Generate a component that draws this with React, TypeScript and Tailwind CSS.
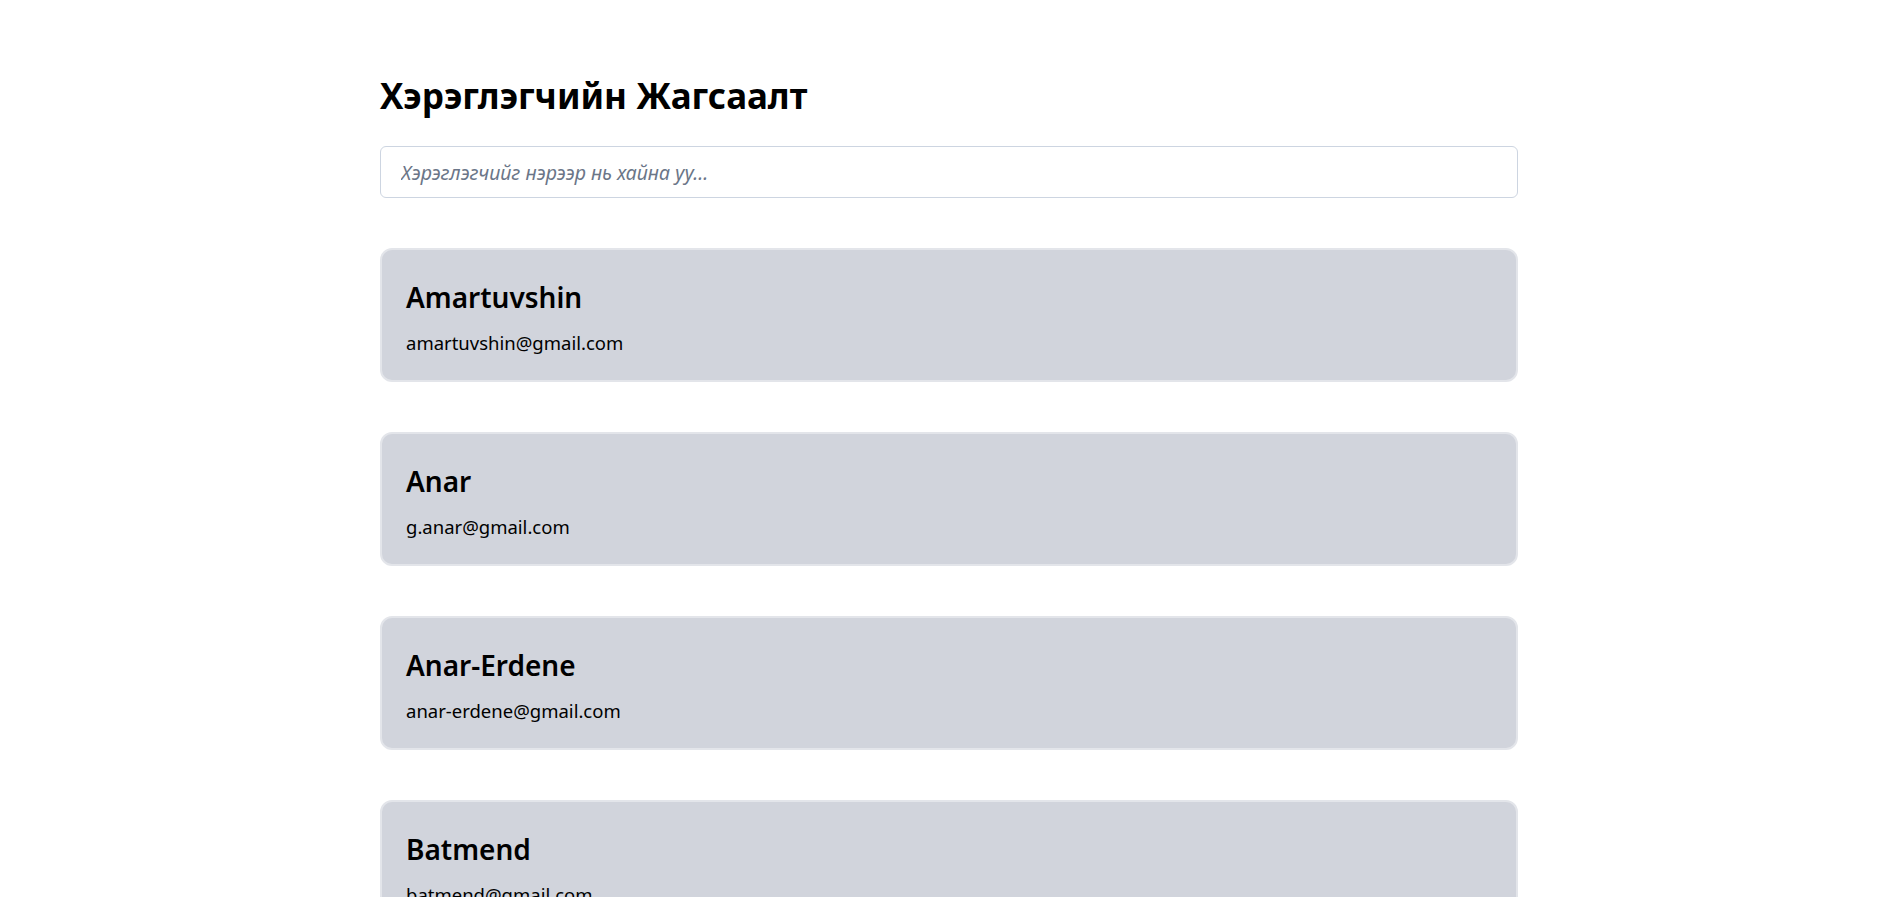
const users = [
  { name: "Amartuvshin", email: "amartuvshin@gmail.com" },
  { name: "Anar", email: "g.anar@gmail.com" },
  { name: "Anar-Erdene", email: "anar-erdene@gmail.com" },
  { name: "Batmend", email: "batmend@gmail.com" },
  { name: "Bilguun", email: "bilguun@gmail.com" },
]

function UserCard({ name, email }: { name: string; email: string }) {
  return (
    <div className="h-[134px] rounded-xl border-2 border-[#e3e5ea] bg-[#d1d4dc] px-[24px] pt-[30px]">
      <h2 className="text-[28px] leading-[34px] font-semibold text-black">{name}</h2>
      <p className="mt-[15px] text-[18.5px] leading-[28px] text-black">{email}</p>
    </div>
  )
}

export default function App() {
  return (
    <div className="min-h-screen bg-white pl-[13px] [font-family:'Noto_Sans',sans-serif]">
      <div className="mx-auto w-[1138px] pt-[76px]">
        <h1 className="text-[35px] leading-[40px] font-bold text-black">Хэрэглэгчийн Жагсаалт</h1>

        <input
          type="text"
          placeholder="Хэрэглэгчийг нэрээр нь хайна уу..."
          className="mt-[30px] block h-[52px] w-full rounded-md border border-[#cdd5e1] px-5 text-[19.5px] italic outline-none placeholder:text-[#6b7688]"
        />

        <div className="mt-[50px] flex flex-col gap-[50px] pb-10">
          {users.map((u) => (
            <UserCard key={u.email} name={u.name} email={u.email} />
          ))}
        </div>
      </div>
    </div>
  )
}
